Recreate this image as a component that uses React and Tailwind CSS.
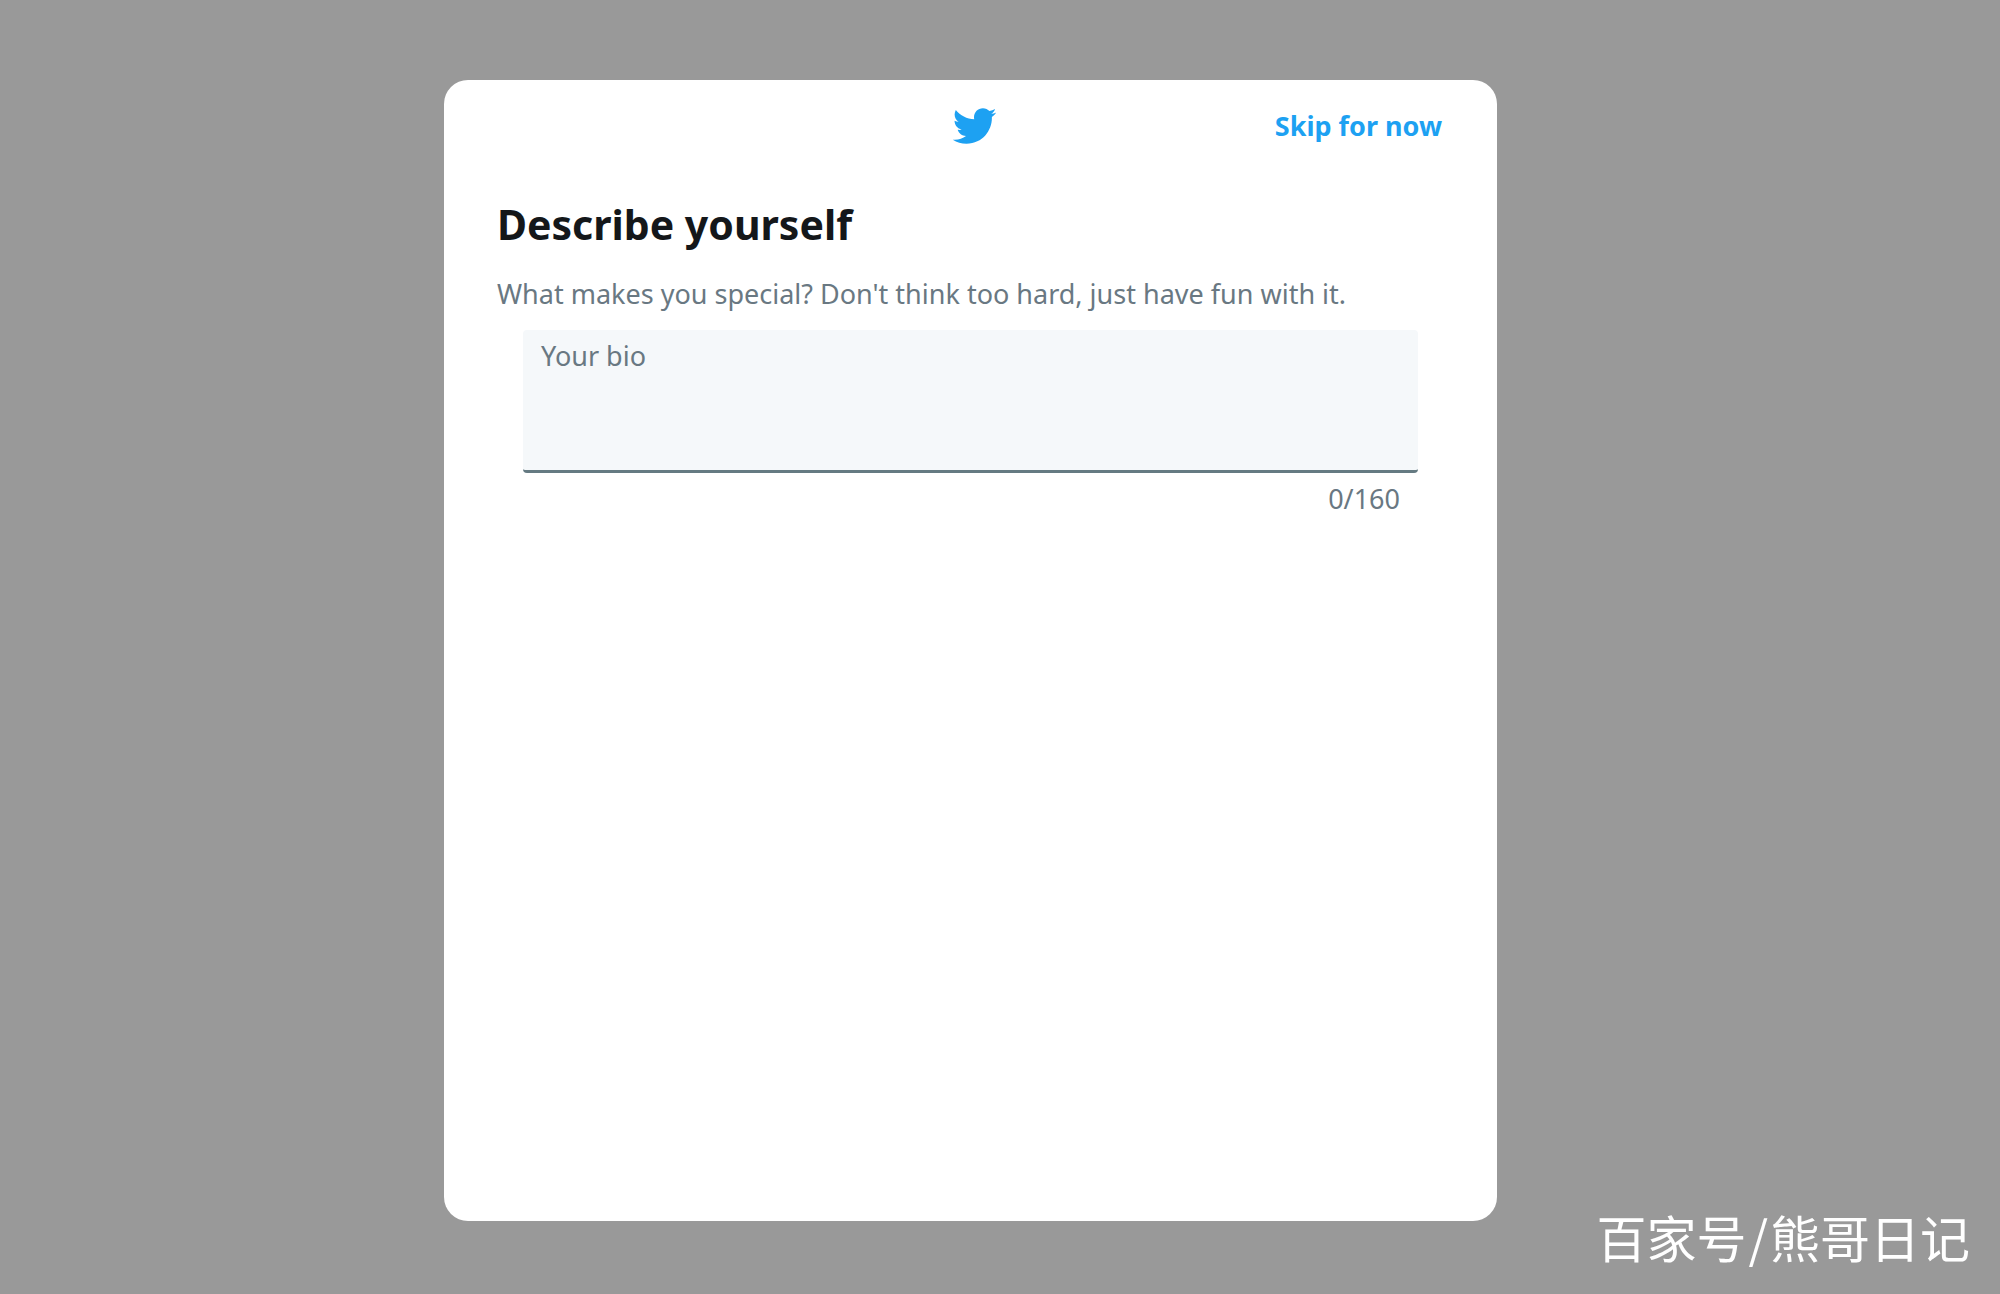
import { useState } from 'react';

const MAX_BIO = 160;

const TwitterLogo = () => (
  <svg viewBox="0 0 24 24" className="w-[46px] h-[46px] fill-[#1da1f2]" aria-label="Twitter" role="img">
    <path d="M23.643 4.937c-.835.37-1.732.62-2.675.733.962-.576 1.7-1.49 2.048-2.578-.9.534-1.897.922-2.958 1.13-.85-.904-2.06-1.47-3.4-1.47-2.572 0-4.658 2.086-4.658 4.66 0 .364.042.718.12 1.06-3.873-.195-7.304-2.05-9.602-4.868-.4.69-.63 1.49-.63 2.342 0 1.616.823 3.043 2.072 3.878-.764-.025-1.482-.234-2.11-.583v.06c0 2.257 1.605 4.14 3.737 4.568-.392.106-.803.162-1.227.162-.3 0-.593-.028-.877-.082.593 1.85 2.313 3.198 4.352 3.234-1.595 1.25-3.604 1.995-5.786 1.995-.376 0-.747-.022-1.112-.065 2.062 1.323 4.51 2.093 7.14 2.093 8.57 0 13.255-7.098 13.255-13.254 0-.2-.005-.402-.014-.602.91-.658 1.7-1.477 2.323-2.41z" />
  </svg>
);

const App = () => {
  const [bio, setBio] = useState('');

  return (
    <div className="relative min-h-screen flex justify-center bg-[#999999] pt-20 pb-[73px] pr-[59px] font-['Segoe_UI','Noto_Sans',sans-serif]">
      <div
        role="dialog"
        aria-labelledby="bio-title"
        className="w-full max-w-[1053px] flex flex-col bg-white rounded-3xl"
      >
        <header className="grid grid-cols-[1fr_auto_1fr] items-center h-[92px] pl-[53px] pr-[47px]">
          <span></span>
          <TwitterLogo />
          <button type="button" className="justify-self-end px-2 text-[27px] leading-9 font-bold text-[#1da1f2]">
            Skip for now
          </button>
        </header>

        <main className="flex-1 px-[53px] pt-6">
          <h1 id="bio-title" className="text-[41px] leading-[56px] font-bold text-[#14171a]">
            Describe yourself
          </h1>
          <p id="bio-hint" className="mt-6 text-[27px] leading-9 text-[#697882]">
            What makes you special? Don't think too hard, just have fun with it.
          </p>

          <div className="px-[26px] pt-[18px]">
            <textarea
              id="bio"
              aria-label="Your bio"
              aria-describedby="bio-hint"
              placeholder="Your bio"
              maxLength={MAX_BIO}
              value={bio}
              onChange={(e) => setBio(e.target.value)}
              className="block w-full h-[143px] px-[18px] py-2 resize-none rounded-sm border-b-3 border-[#657a82] bg-[#f5f8fa] text-[27px] leading-9 text-[#14171a] placeholder:text-[#697882] focus:outline-none"
            />
            <div className="px-[18px] pt-2 text-right text-[27px] leading-9 text-[#697882]">
              {bio.length}/{MAX_BIO}
            </div>
          </div>
        </main>
      </div>

      <div className="absolute right-[30px] bottom-5 text-[50px] leading-[76px] text-white font-['Noto_Sans_CJK_SC',sans-serif]">
        百家号<span className="px-0.5">/</span>熊哥日记
      </div>
    </div>
  );
};

export default App;
